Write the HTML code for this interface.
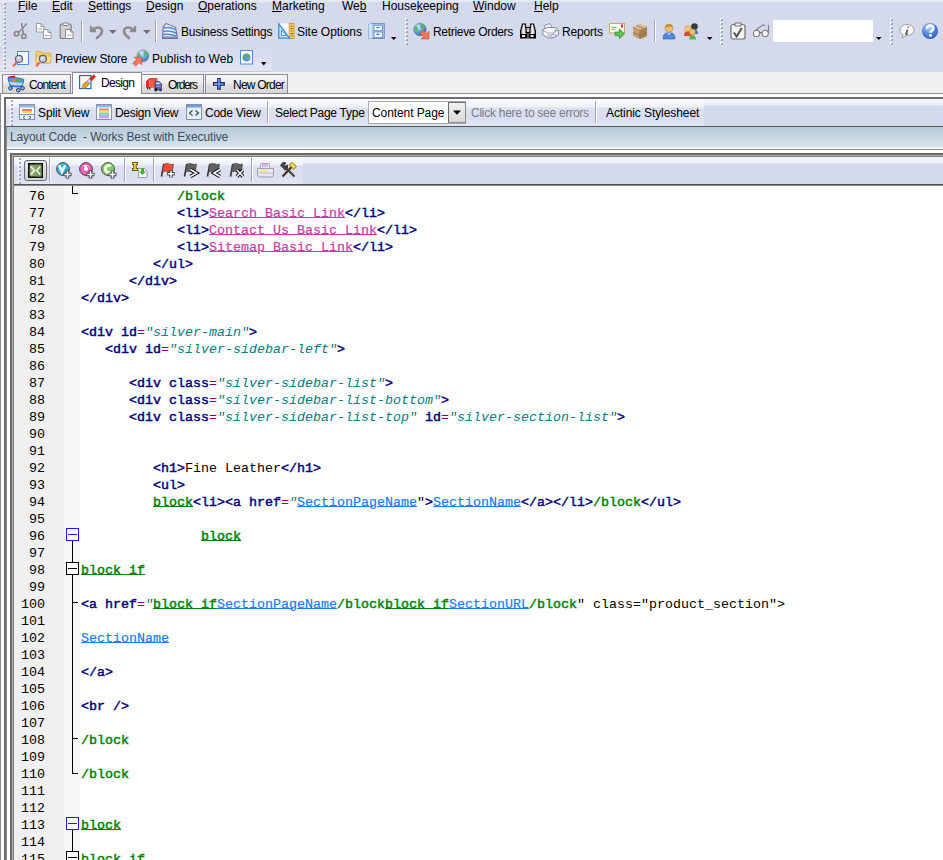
<!DOCTYPE html>
<html><head><meta charset="utf-8"><style>
*{margin:0;padding:0;box-sizing:border-box}
html,body{width:943px;height:860px;overflow:hidden;background:#f0f0f0;font-family:"Liberation Sans",sans-serif;font-size:11.5px;color:#000}
.a{position:absolute}
.t{position:absolute;white-space:pre;line-height:14px;font-size:12px}
.u{text-decoration:underline}
.code span{text-underline-offset:0px}
svg{position:absolute;overflow:visible}
.code{position:absolute;left:81px;top:188px;font-family:"Liberation Mono",monospace;font-size:13.33px;line-height:17px;white-space:pre;color:#000}
.ln{position:absolute;left:15px;top:188px;width:30px;text-align:right;font-family:"Liberation Mono",monospace;font-size:13.33px;line-height:17px;white-space:pre;color:#000}
.tg{color:#000080;-webkit-text-stroke:0.45px #000080}
.an{color:#000080;-webkit-text-stroke:0.45px #000080}
.eq{color:#800080}
.av{color:#008080;font-style:italic}
.bl{color:#008000;-webkit-text-stroke:0.45px #008000}
.blu{color:#008000;-webkit-text-stroke:0.45px #008000;text-decoration:underline}
.lk{color:#cc38a8;-webkit-text-stroke:0.2px #cc38a8;text-decoration:underline}
.sp{color:#1a7ef0;-webkit-text-stroke:0.2px #1a7ef0;text-decoration:underline}
.grip{position:absolute;width:3px;background-image:linear-gradient(#a4a8bc 2px,transparent 2px),linear-gradient(#fff 2px,transparent 2px);background-size:2px 4px,2px 4px;background-position:1px 1px,0 0;background-repeat:repeat-y}
.sep{position:absolute;width:1px;background:#a0a4b8;border-right:1px solid #fff;width:2px}
</style></head><body>
<div class="a" style="left:0;top:0;width:943px;height:72px;background:#d4d9ec"></div>
<div class="a" style="left:0;top:0;width:943px;height:2px;background:#e6e9f4"></div>
<div class="a" style="left:0;top:0;width:1px;height:72px;background:#e6e9f4"></div>
<div class="a" style="left:0;top:46px;width:272px;height:26px;background:linear-gradient(#d4d9ec,#d6dbee 30%,#e2e5f2);border-bottom:1px solid #c6cadc"></div>
<div class="grip" style="left:3px;top:2px;height:14px"></div>
<div class="t" style="left:18px;top:-1px"><span class="u">F</span>ile</div>
<div class="t" style="left:52px;top:-1px"><span class="u">E</span>dit</div>
<div class="t" style="left:88px;top:-1px"><span class="u">S</span>ettings</div>
<div class="t" style="left:146px;top:-1px"><span class="u">D</span>esign</div>
<div class="t" style="left:198px;top:-1px"><span class="u">O</span>perations</div>
<div class="t" style="left:272px;top:-1px"><span class="u">M</span>arketing</div>
<div class="t" style="left:342px;top:-1px">We<span class="u">b</span></div>
<div class="t" style="left:382px;top:-1px">House<span class="u">k</span>eeping</div>
<div class="t" style="left:473px;top:-1px"><span class="u">W</span>indow</div>
<div class="t" style="left:534px;top:-1px"><span class="u">H</span>elp</div>
<div class="grip" style="left:3px;top:17px;height:28px"></div>
<div class="t" style="left:181px;top:25px;letter-spacing:-0.25px;">Business Settings</div>
<div class="t" style="left:297px;top:25px;letter-spacing:-0.036px;">Site Options</div>
<div class="t" style="left:433px;top:25px;letter-spacing:-0.314px;">Retrieve Orders</div>
<div class="t" style="left:562px;top:25px;letter-spacing:-0.167px;">Reports</div>
<div class="t" style="left:55px;top:52px;letter-spacing:-0.192px;">Preview Store</div>
<div class="t" style="left:152px;top:52px;letter-spacing:0.046px;">Publish to Web</div>
<div class="grip" style="left:3px;top:46px;height:25px"></div>
<div class="a" style="left:2px;top:74px;width:69px;height:19px;background:linear-gradient(#f6f6f6,#ececec 45%,#e0e0e0 55%,#d6d6d6);border:1px solid #898c95;border-bottom:none"></div>
<div class="t" style="left:29px;top:78px;letter-spacing:-0.883px;">Content</div>
<div class="a" style="left:141px;top:74px;width:63px;height:19px;background:linear-gradient(#f6f6f6,#ececec 45%,#e0e0e0 55%,#d6d6d6);border:1px solid #898c95;border-bottom:none"></div>
<div class="t" style="left:168px;top:78px;letter-spacing:-1.34px;">Orders</div>
<div class="a" style="left:205px;top:74px;width:83px;height:19px;background:linear-gradient(#f6f6f6,#ececec 45%,#e0e0e0 55%,#d6d6d6);border:1px solid #898c95;border-bottom:none"></div>
<div class="t" style="left:233px;top:78px;letter-spacing:-0.775px;">New Order</div>
<div class="a" style="left:0;top:93px;width:943px;height:767px;background:#fff;border-left:1px solid #898c95;border-top:1px solid #898c95"></div>
<div class="a" style="left:72px;top:72px;width:70px;height:22px;background:#fff;border:1px solid #898c95;border-bottom:none"></div>
<div class="t" style="left:101px;top:76px;letter-spacing:-0.68px;">Design</div>
<div class="a" style="left:4px;top:97px;width:939px;height:763px;background:#fff;border-left:2px solid #6e6e6e;border-top:2px solid #6e6e6e"></div>
<div class="a" style="left:6px;top:99px;width:937px;height:27px;background:linear-gradient(#f6f7fb,#eceef7 6px,#d4d9ec 7px,#d4d9ec)"></div>
<div class="a" style="left:6px;top:99px;width:698px;height:27px;background:linear-gradient(#fbfcfe,#eff1f8 8px,#dde0f0 9px,#dadeef 20px,#e2e5f2)"></div>
<div class="a" style="left:6px;top:126px;width:937px;height:1px;background:#555"></div>
<div class="grip" style="left:10px;top:99px;height:28px"></div>
<div class="t" style="left:38px;top:106px;letter-spacing:-0.111px;">Split View</div>
<div class="t" style="left:115px;top:106px;letter-spacing:-0.3px;">Design View</div>
<div class="t" style="left:205px;top:106px;letter-spacing:-0.25px;">Code View</div>
<div class="t" style="left:275px;top:106px;letter-spacing:-0.267px;">Select Page Type</div>
<div class="t" style="left:606px;top:106px;letter-spacing:-0.082px;">Actinic Stylesheet</div>
<div class="t" style="left:471px;top:106px;letter-spacing:-0.261px;color:#7c7c84">Click here to see errors</div>
<div class="sep" style="left:267px;top:101px;height:22px"></div>
<div class="sep" style="left:595px;top:101px;height:22px"></div>
<div class="a" style="left:368px;top:101px;width:98px;height:23px;background:#fff;border:1px solid #a5acb5"></div>
<div class="t" style="left:372px;top:106px;letter-spacing:-0.091px;">Content Page</div>
<div class="a" style="left:448px;top:102px;width:18px;height:21px;background:linear-gradient(#f0f0f0,#d8d8d8);border:1px solid #6a6a6a;border-right-color:#8a8a8a;border-bottom-color:#8a8a8a"></div>
<svg style="left:453px;top:110px" width="8" height="5"><path d="M0 .5h8L4 4.8z" fill="#000"/></svg>
<div class="a" style="left:6px;top:127px;width:937px;height:20px;background:linear-gradient(#b9cad6,#d5e3ee);border-left:1px solid #505050"></div>
<div class="a" style="left:6px;top:147px;width:937px;height:1px;background:#f4f2ee"></div>
<div class="a" style="left:6px;top:149px;width:937px;height:1px;background:#8a8c95"></div>
<div class="a" style="left:6px;top:127px;width:1px;height:733px;background:#8a8a8a"></div>
<div class="t" style="left:10px;top:130px;letter-spacing:-0.128px;color:#3c4a5c">Layout Code  - Works Best with Executive</div>
<div class="a" style="left:7px;top:150px;width:936px;height:710px;background:#fff"></div>
<div class="a" style="left:10px;top:153px;width:933px;height:707px;background:#f0f0f0;border-left:2px solid #6a6a6a;border-top:2px solid #6a6a6a"></div>
<div class="a" style="left:12px;top:155px;width:931px;height:705px;border-left:1px solid #b4b4b4;border-top:1px solid #b4b4b4"></div>
<div class="a" style="left:13px;top:156px;width:930px;height:704px;border-left:1px solid #7c7c7c;border-top:1px solid #7c7c7c"></div>
<div class="a" style="left:14px;top:157px;width:929px;height:27px;background:linear-gradient(#f6f7fb,#eceef7 6px,#d4d9ec 7px,#d4d9ec)"></div>
<div class="a" style="left:14px;top:157px;width:289px;height:27px;background:linear-gradient(#fbfcfe,#eff1f8 8px,#dde0f0 9px,#dadeef 20px,#e2e5f2)"></div>
<div class="a" style="left:14px;top:184px;width:929px;height:1px;background:#555"></div>
<div class="a" style="left:14px;top:185px;width:929px;height:1px;background:#8c8c8c"></div>
<div class="grip" style="left:18px;top:157px;height:28px"></div>
<div class="a" style="left:14px;top:186px;width:50px;height:674px;background:#f0f0f0"></div>
<div class="a" style="left:64px;top:186px;width:16px;height:674px;background:repeating-conic-gradient(#f0f0f0 0 25%,#fff 0 50%) 0 0/2px 2px"></div>
<div class="a" style="left:80px;top:186px;width:863px;height:674px;background:#fff"></div>
<div class="ln">76
77
78
79
80
81
82
83
84
85
86
87
88
89
90
91
92
93
94
95
96
97
98
99
100
101
102
103
104
105
106
107
108
109
110
111
112
113
114
115</div>
<div class="code">            <span class="bl">/block</span>
            <span class="tg">&lt;li&gt;</span><span class="lk">Search Basic Link</span><span class="tg">&lt;/li&gt;</span>
            <span class="tg">&lt;li&gt;</span><span class="lk">Contact Us Basic Link</span><span class="tg">&lt;/li&gt;</span>
            <span class="tg">&lt;li&gt;</span><span class="lk">Sitemap Basic Link</span><span class="tg">&lt;/li&gt;</span>
         <span class="tg">&lt;/ul&gt;</span>
      <span class="tg">&lt;/div&gt;</span>
<span class="tg">&lt;/div&gt;</span>

<span class="tg">&lt;div </span><span class="an">id</span><span class="eq">=</span><span class="av">&quot;silver-main&quot;</span><span class="tg">&gt;</span>
   <span class="tg">&lt;div </span><span class="an">id</span><span class="eq">=</span><span class="av">&quot;silver-sidebar-left&quot;</span><span class="tg">&gt;</span>

      <span class="tg">&lt;div </span><span class="an">class</span><span class="eq">=</span><span class="av">&quot;silver-sidebar-list&quot;</span><span class="tg">&gt;</span>
      <span class="tg">&lt;div </span><span class="an">class</span><span class="eq">=</span><span class="av">&quot;silver-sidebar-list-bottom&quot;</span><span class="tg">&gt;</span>
      <span class="tg">&lt;div </span><span class="an">class</span><span class="eq">=</span><span class="av">&quot;silver-sidebar-list-top&quot;</span> <span class="an">id</span><span class="eq">=</span><span class="av">&quot;silver-section-list&quot;</span><span class="tg">&gt;</span>


         <span class="tg">&lt;h1&gt;</span>Fine Leather<span class="tg">&lt;/h1&gt;</span>
         <span class="tg">&lt;ul&gt;</span>
         <span class="blu">block</span><span class="tg">&lt;li&gt;&lt;a </span><span class="an">href</span><span class="eq">=</span><span class="av">&quot;</span><span class="sp">SectionPageName</span>&quot;<span class="tg">&gt;</span><span class="sp">SectionName</span><span class="tg">&lt;/a&gt;&lt;/li&gt;</span><span class="bl">/block</span><span class="tg">&lt;/ul&gt;</span>

               <span class="blu">block</span>

<span class="blu">block if</span>

<span class="tg">&lt;a </span><span class="an">href</span><span class="eq">=</span><span class="av">&quot;</span><span class="blu">block if</span><span class="sp">SectionPageName</span><span class="bl">/block</span><span class="blu">block if</span><span class="sp">SectionURL</span><span class="bl">/block</span>&quot; class=&quot;product_section&quot;&gt;

<span class="sp">SectionName</span>

<span class="tg">&lt;/a&gt;</span>

<span class="tg">&lt;br /&gt;</span>

<span class="bl">/block</span>

<span class="bl">/block</span>


<span class="blu">block</span>

<span class="blu">block if</span></div>
<!-- row1 icons -->
<svg style="left:13px;top:22px" width="16" height="18" viewBox="0 0 16 18"><g stroke="#8a8a8a" fill="none"><path d="M8.5 1l1.8 10.5M14 1.5L5.5 10.5" stroke-width="1.5"/><circle cx="3.6" cy="11.8" r="2.2" stroke-width="1.7"/><circle cx="10.8" cy="14.3" r="2.2" stroke-width="1.7"/></g></svg>
<svg style="left:35px;top:22px" width="18" height="18" viewBox="0 0 18 18"><g stroke="#9a9a9a" fill="#fcfcfc"><path d="M1.5 1.5h4.5l3 3v5.5h-7.5z"/><path d="M8.5 7.5h4.5l3 3v6h-7.5z"/></g><path d="M6 1.5v3h3M13 7.5v3h3" fill="none" stroke="#9a9a9a"/><path d="M3 7h4M10 13.5h4.5" stroke="#a8a8a8"/></svg>
<svg style="left:59px;top:22px" width="16" height="18" viewBox="0 0 16 18"><rect x="1.2" y="2" width="11" height="14.5" rx="2" fill="#d0d0d0" stroke="#7e7e7e" stroke-width="1.1"/><rect x="4" y="1" width="5.5" height="2.5" rx=".8" fill="#f4f4f4" stroke="#7e7e7e"/><path d="M6.5 7.5h5l2.5 2.5v6.5H6.5z" fill="#fff" stroke="#8a8a8a"/><path d="M11.5 7.5V10H14" fill="none" stroke="#8a8a8a"/><path d="M8 13h4.5" stroke="#a8a8a8"/></svg>
<div class="a" style="left:81px;top:20px;width:1px;height:22px;background:#9ea3b5"></div><div class="a" style="left:82px;top:20px;width:1px;height:22px;background:#fff"></div>
<svg style="left:89px;top:23px" width="15" height="16" viewBox="0 0 15 16"><path d="M2 3v5h5" fill="none" stroke="#8d8d8d" stroke-width="2.4" stroke-linejoin="round"/><path d="M3 7.5C6 3.5 13 3 13 8.5c0 3-3 4.5-5 6.5" fill="none" stroke="#8d8d8d" stroke-width="2.6" stroke-linecap="round"/></svg>
<svg style="left:109px;top:30px" width="8" height="4"><path d="M0 0h7.5L3.75 4z" fill="#6e6e6e"/></svg>
<svg style="left:122px;top:23px" width="15" height="16" viewBox="0 0 15 16"><path d="M13 3v5H8" fill="none" stroke="#8d8d8d" stroke-width="2.4" stroke-linejoin="round"/><path d="M12 7.5C9 3.5 2 3 2 8.5c0 3 3 4.5 5 6.5" fill="none" stroke="#8d8d8d" stroke-width="2.6" stroke-linecap="round"/></svg>
<svg style="left:143px;top:30px" width="8" height="4"><path d="M0 0h7.5L3.75 4z" fill="#6e6e6e"/></svg>
<div class="a" style="left:155px;top:20px;width:1px;height:22px;background:#9ea3b5"></div><div class="a" style="left:156px;top:20px;width:1px;height:22px;background:#fff"></div>
<svg style="left:162px;top:23px" width="16" height="16" viewBox="0 0 16 16"><path d="M4 .6L1.2 4.2.6 15.4h14.8L13.6 4.3z" fill="#eef4fc" stroke="#6a6c94" stroke-width="1.1"/><path d="M1.5 5.2Q7 3.5 13.8 6.8M1.3 8.5Q7.5 7 14.2 10M1 11.6Q8 10.5 14.8 13" fill="none" stroke="#4a8ae0" stroke-width="1.5"/><rect x="1" y="13.3" width="14" height="1.8" fill="#8a90bc"/></svg>
<svg style="left:278px;top:23px" width="17" height="16" viewBox="0 0 17 16"><rect x="2" y=".5" width="10" height="15" fill="#fff"/><rect x="11.2" y=".5" width="4.8" height="15" fill="#f4d060" stroke="#c89a30" stroke-width=".9"/><path d="M12.5 3h2M12.5 5.5h2.5M12.5 8h2M12.5 10.5h2.5M12.5 13h2" stroke="#705010" stroke-width=".8"/><path d="M.8 .8v14.4h10.8z" fill="#c4e0f8" stroke="#3a88d8" stroke-width="1.2"/><path d="M3.5 7v5.5h5z" fill="#fff" stroke="#3a88d8" stroke-width=".9"/></svg>
<svg style="left:368px;top:23px" width="17" height="16" viewBox="0 0 17 16"><path d="M.6 1.5L4 .5h12.4v15H.6z" fill="#a8c8ee" stroke="#6a90c4" stroke-width=".9"/><path d="M.6 1.5L4 .5v15H.6z" fill="#cfe2f8"/><rect x="6" y="2.2" width="8.5" height="5.5" fill="#f0f6fd" stroke="#6a90c4" stroke-width=".9"/><rect x="6" y="9" width="8.5" height="5.5" fill="#f0f6fd" stroke="#6a90c4" stroke-width=".9"/><path d="M8.5 4.5h3M8.5 11.3h3" stroke="#3a6ab0" stroke-width="1.2"/></svg>
<svg style="left:391px;top:37px" width="6" height="3"><path d="M0 0h5.5L2.75 3z" fill="#000"/></svg>
<div class="grip" style="left:405px;top:18px;height:28px"></div>
<svg style="left:412px;top:22px" width="18" height="18" viewBox="0 0 18 18"><defs><radialGradient id="gl" cx=".35" cy=".3" r=".8"><stop offset="0" stop-color="#d8ecff"/><stop offset=".5" stop-color="#5aa0e0"/><stop offset="1" stop-color="#2a60b0"/></radialGradient></defs><circle cx="8" cy="7.5" r="6.3" fill="url(#gl)" stroke="#707890" stroke-width=".6"/><path d="M3.5 4.5c1.5-.5 3 .5 2.5 2s-1.5 1.5-1 3-1 1-1.5-.5S2.5 5 3.5 4.5zM8.5 2c2.5.3 4.5 2 4.8 4-1.5-.3-2.5.2-3 1-1.5-.5-2.3-2.5-1.8-5z" fill="#5cb84a" opacity=".9"/><path d="M17 9v8H9l2.5-2.5L8 11l3-3 3.5 3.5z" fill="#f4785a" stroke="#c84a30" stroke-width=".6"/></svg>
<!-- row1 right -->
<svg style="left:520px;top:23px" width="16" height="16" viewBox="0 0 16 16"><defs><linearGradient id="bn" x1="0" x2="1"><stop offset="0" stop-color="#909090"/><stop offset=".5" stop-color="#f4f4f4"/><stop offset="1" stop-color="#a0a0a0"/></linearGradient></defs><g stroke="#000" stroke-width="1.2"><path d="M2.5 1h3v3.5l1.5 1.5V15H.6V8z" fill="url(#bn)"/><path d="M10.5 1h3l1.9 7v7H9V6l1.5-1.5z" fill="url(#bn)"/><rect x="6" y="4.5" width="4" height="5" fill="#d0d0d0"/></g><rect x=".6" y="11" width="6.4" height="4" fill="#000"/><rect x="9" y="11" width="6.4" height="4" fill="#000"/><rect x="2" y="12" width="3" height="2" fill="#e8e8e8"/><rect x="10.5" y="12" width="3" height="2" fill="#e8e8e8"/></svg>
<svg style="left:542px;top:23px" width="18" height="16" viewBox="0 0 18 16"><path d="M3.5 6L2 2.5 8 .5l2.5 5z" fill="#e8f0fa" stroke="#8a88a8" stroke-width=".9"/><path d="M.8 6.5L6 4.5h7l3.5 2.5v5L11 15H5.5L.8 11.5z" fill="#f4f4fa" stroke="#8a88a8" stroke-width="1"/><path d="M.8 7.5L6 10h5l5.5-3M6 10v5M11 10v5" fill="none" stroke="#a8a8c0" stroke-width=".9"/><path d="M7 12.5l5-1.5 3 1.5-4 2z" fill="#dde8f8" stroke="#8a88a8" stroke-width=".7"/><rect x="12.5" y="6.8" width="2" height="1.2" fill="#3ab03a"/></svg>
<svg style="left:608px;top:22px" width="18" height="17" viewBox="0 0 18 17"><rect x="1.5" y="1.5" width="15" height="9.5" fill="#fdfaf0" stroke="#c8a868"/><rect x="13" y="2.5" width="2" height="3" fill="#e83030"/><path d="M3.5 5.5h5M3.5 7.5h3.5" stroke="#5a9ae0" stroke-width=".9"/><path d="M7 10h4.5V7l5 4.8-5 4.8v-3H7z" fill="#58c848" stroke="#2a8a2a" stroke-width=".8"/></svg>
<svg style="left:632px;top:23px" width="16" height="16" viewBox="0 0 16 16"><path d="M1 4l7-3 7 3v9l-7 3-7-3z" fill="#c4a070"/><path d="M1 4l7 3 7-3M8 7v9" stroke="#8a6a40" fill="none"/><path d="M8 7l7-3v9l-7 3z" fill="#a88050"/><path d="M1 4l7-3 7 3-7 3z" fill="#e0c090"/><path d="M1 9.5l7 3 7-3M4.5 2.5l7 3" stroke="#8a6a40" fill="none" stroke-width=".8"/></svg>
<div class="a" style="left:654px;top:20px;width:1px;height:22px;background:#9ea3b5"></div><div class="a" style="left:655px;top:20px;width:1px;height:22px;background:#fff"></div>
<svg style="left:662px;top:22px" width="14" height="18" viewBox="0 0 14 18"><path d="M1 17c0-4.5 2-6.5 6-6.5s6 2 6 6.5z" fill="#4a88d8" stroke="#3a60a0" stroke-width=".6"/><path d="M5.5 10.5l1.5 2 1.5-2" stroke="#fff" fill="none" stroke-width=".9"/><circle cx="7" cy="6" r="4" fill="#f0c070" stroke="#b08030" stroke-width=".5"/><path d="M3 5.5c0-4 8-4 8 0-1.5-1.5-6.5-1.5-8 0z" fill="#b8862a"/></svg>
<svg style="left:683px;top:22px" width="18" height="18" viewBox="0 0 18 18"><circle cx="11.5" cy="4.5" r="3.3" fill="#3a3a3a"/><path d="M8 12c0-3 1.5-5 3.5-5s3.5 2 3.5 5z" fill="#4a6aa8"/><circle cx="4.8" cy="6.8" r="3.2" fill="#f0c878" stroke="#c09040" stroke-width=".5"/><path d="M1 14c0-3.5 1.2-4.5 3.8-4.5s3.8 1 3.8 4.5z" fill="#e04a30"/><circle cx="9.5" cy="10" r="3" fill="#f0c070" stroke="#a07030" stroke-width=".5"/><path d="M6 17.5c0-3 1.5-4.3 3.5-4.3s3.5 1.3 3.5 4.3z" fill="#58b848"/></svg>
<svg style="left:707px;top:37px" width="6" height="3"><path d="M0 0h5.5L2.75 3z" fill="#000"/></svg>
<div class="grip" style="left:720px;top:18px;height:28px"></div>
<svg style="left:730px;top:22px" width="17" height="18" viewBox="0 0 17 18"><rect x="1" y="2.5" width="14" height="14.5" rx="2" fill="#f4f4f4" stroke="#6e6e6e" stroke-width="1.2"/><rect x="5" y="1" width="6" height="3" rx=".5" fill="#f0f0f0" stroke="#6e6e6e" stroke-width="1.1"/><path d="M3.8 10.5l2.8 4 5.2-8.5" fill="none" stroke="#505050" stroke-width="2"/></svg>
<svg style="left:752px;top:24px" width="18" height="14" viewBox="0 0 18 14"><g fill="#f8f8f8" stroke="#7a7a7a" stroke-width="1.1"><circle cx="4.5" cy="9.4" r="3.1"/><circle cx="13.2" cy="9.4" r="3.1"/></g><path d="M7.6 8.6h2.5M2.8 6.8L11 .9q1.2-.5 1.3 1.2M16.4 8.8V.8" fill="none" stroke="#7a7a7a" stroke-width="1.1"/></svg>
<div class="a" style="left:773px;top:20px;width:100px;height:22px;background:#fff"></div>
<svg style="left:876px;top:37px" width="6" height="3"><path d="M0 0h5.5L2.75 3z" fill="#000"/></svg>
<div class="grip" style="left:890px;top:18px;height:28px"></div>
<svg style="left:899px;top:23px" width="16" height="16" viewBox="0 0 16 16"><path d="M8 1.5c4 0 7 2.5 7 5.5s-3 5.5-7 5.5l-1 0-4 2.5 1-3.5C2 10.5 1 9 1 7c0-3 3-5.5 7-5.5z" fill="#f8f8f8" stroke="#a0a0a0"/><path d="M8.6 4.2h1.2M8.6 6.5l-1.5 4.5h1.6" stroke="#505050" stroke-width="1.6" fill="none"/></svg>
<svg style="left:921px;top:22px" width="18" height="18" viewBox="0 0 18 18"><defs><radialGradient id="hg" cx=".4" cy=".3" r=".8"><stop offset="0" stop-color="#b8d4f8"/><stop offset=".55" stop-color="#4a80d8"/><stop offset="1" stop-color="#2a58b0"/></radialGradient></defs><circle cx="9" cy="9" r="8" fill="url(#hg)"/><path d="M5.8 6.8c0-2.2 1.6-3.2 3.3-3.2s3.2 1 3.2 2.8c0 2.2-2.7 2.2-2.7 4.3" fill="none" stroke="#fff" stroke-width="2.6"/><rect x="8.2" y="12.2" width="2.6" height="2.4" fill="#fff"/></svg>
<!-- row2 icons -->
<svg style="left:12px;top:50px" width="18" height="18" viewBox="0 0 18 18"><rect x="5.5" y="1.5" width="11" height="13" fill="#f4f8fc" stroke="#4a8ad8"/><path d="M1.2 16.3l3.2-3.8" stroke="#f05a3a" stroke-width="2"/><circle cx="7" cy="8.9" r="3.5" fill="#c8c8e8" stroke="#606070" stroke-width="1.2"/><circle cx="6.3" cy="8" r="1.2" fill="#fff" opacity=".8"/></svg>
<svg style="left:35px;top:49px" width="18" height="19" viewBox="0 0 18 19"><path d="M1 2.5h5l1.5 1.5h8V14H1z" fill="#f0d060" stroke="#c8a030" stroke-width=".7"/><path d="M1 7h15.8L15 14H1z" fill="#f8e088" stroke="#c8a040" stroke-width=".6"/><path d="M1.2 17.3l3.2-3.8" stroke="#f05a3a" stroke-width="2"/><circle cx="7.9" cy="9.9" r="3.5" fill="#c8c8e8" stroke="#606070" stroke-width="1.2"/><circle cx="7.2" cy="9" r="1.2" fill="#fff" opacity=".8"/></svg>
<svg style="left:132px;top:49px" width="18" height="20" viewBox="0 0 18 20"><defs><radialGradient id="gl2" cx=".4" cy=".25" r=".8"><stop offset="0" stop-color="#e8f4ff"/><stop offset=".5" stop-color="#6aaae8"/><stop offset="1" stop-color="#3a6ab8"/></radialGradient></defs><circle cx="10.9" cy="6.9" r="5.9" fill="url(#gl2)" stroke="#707890" stroke-width=".7"/><path d="M6.5 4.5c1.5-.5 2.5.5 2 2s-1.5 1.5-1 3-1.5.5-1.5-1S5.5 5 6.5 4.5zM11.5 2.2c2.3.3 4 1.8 4.3 3.5-1.3-.2-2.2.2-2.7 1-1.3-.5-2-2.3-1.6-4.5z" fill="#60b850" opacity=".85"/><path d="M2 8.2h7.7v7.7l-2.4-2.4-3.6 3.6-2.9-2.9 3.6-3.6z" fill="#f4785a" stroke="#c84a30" stroke-width=".6"/></svg>
<svg style="left:240px;top:50px" width="14" height="15" viewBox="0 0 14 15"><rect x=".5" y=".5" width="12" height="13.5" fill="#fff" stroke="#4a8ed8"/><circle cx="6.5" cy="7.5" r="4" fill="#5a9ad8"/><path d="M4 5c1 0 2 1 1.5 2S4 8 4.5 9.5 3 10 3 8.5 3 5.5 4 5zM7 3.5c2 .5 3 2 3 3-1 0-2 .5-2 1-1 0-2-2-1-4z" fill="#5cb04c"/></svg>
<svg style="left:261px;top:62px" width="6" height="4"><path d="M0 0h5.5L2.75 3.5z" fill="#000"/></svg>
<!-- tabs icons -->
<svg style="left:6px;top:75px" width="19" height="18" viewBox="0 0 19 18"><path d="M2 2.6L9 1.3" stroke="#c81818" stroke-width="1.8"/><path d="M1.8 3.2C5 2 13 2.5 18 4.5L16 11.5C12 12.5 7 12 4 10.5z" fill="#4a9ae4" stroke="#2a68c0" stroke-width=".9"/><path d="M3.5 6.5C7 7.5 12 8 16.5 7.5L16 10C12 10.8 7 10.2 4 9z" fill="#d8ecfa" opacity=".8"/><ellipse cx="10" cy="5" rx="4" ry="1.5" fill="#f08030"/><ellipse cx="12" cy="5.2" rx="2.2" ry="1.2" fill="#50b040"/><g fill="#8ac0ea" stroke="#203050" stroke-width="1"><circle cx="4.5" cy="13.2" r="1.8"/><circle cx="16.5" cy="13.2" r="1.8"/><circle cx="12.3" cy="15.2" r="1.8"/></g></svg>
<svg style="left:78px;top:74px" width="18" height="16" viewBox="0 0 18 16"><rect x="1.6" y="1.6" width="11.4" height="13" fill="#fff" stroke="#1a6ad8" stroke-width="1.2"/><path d="M4 14.5C4 11 5.8 8.5 8.8 7.3L11.2 9.7C10.2 12.6 7.5 14.5 4 14.5z" fill="#e0a810" stroke="#a07010" stroke-width=".5"/><path d="M8.8 7.3L11.4 4.8 13.8 7.2 11.2 9.7z" fill="#d0c8f4" stroke="#6a60b0" stroke-width=".6"/><path d="M11.2 4.6l4.5-4.2 2.2 2.2-4.2 4.6z" fill="#d82a1a"/></svg>
<svg style="left:145px;top:77px" width="18" height="15" viewBox="0 0 18 15"><path d="M1 4.5L4.5 1.2H12.3V10.5H1z" fill="#d42010"/><path d="M1 4.5L4.5 1.2V10.5H1z" fill="#e83020"/><path d="M4.5 2.2H12V10H4.5z" fill="#f05a40"/><path d="M4.5 3v7" stroke="#ff9a80" stroke-width=".8"/><path d="M10 4.5h4.3l2.2 2.5v6h-6.5z" fill="#5860a8" stroke="#30387a" stroke-width=".7"/><path d="M11 5.3h3l1.5 2h-4.5z" fill="#b8d8f8"/><path d="M11 9.5h4.5" stroke="#9aa0d0" stroke-width="1"/><rect x="2" y="10" width="1.3" height="2.5" fill="#404040"/><rect x="4" y="10" width="1.3" height="2.5" fill="#404040"/><ellipse cx="10.8" cy="12.5" rx="1.5" ry="2" fill="#202020"/><ellipse cx="15.5" cy="13.3" rx="1.2" ry=".9" fill="#202020"/></svg>
<svg style="left:212px;top:76px" width="14" height="15" viewBox="0 0 14 15"><defs><linearGradient id="pg" x1="0" y1="0" x2="1" y2="1"><stop offset="0" stop-color="#9ad8ff"/><stop offset="1" stop-color="#2a88e8"/></linearGradient></defs><path d="M5.7 2.5h2.5v4.1h4.1v2.7H8.2v4H5.7v-4H1.5V6.6h4.2z" fill="url(#pg)" stroke="#20206a" stroke-width="1.1"/></svg>
<!-- design toolbar icons -->
<svg style="left:19px;top:104px" width="16" height="16" viewBox="0 0 16 16"><rect x=".5" y=".5" width="15" height="15" fill="#fff" stroke="#8a90a8"/><rect x="1" y="1" width="14" height="2.5" fill="#8ab8ec"/><rect x="3" y="5" width="10" height="2" fill="#f87a68"/><rect x="3" y="7" width="10" height="2" fill="#f8d860"/><path d="M1 10.5h14" stroke="#8a90a8"/><rect x="1" y="11" width="14" height="4" fill="#e0f0fa"/><path d="M6 11.8l-2 1.6 2 1.6M10 11.8l2 1.6-2 1.6" stroke="#505050" fill="none" stroke-width=".9"/></svg>
<svg style="left:96px;top:104px" width="16" height="16" viewBox="0 0 16 16"><rect x=".5" y=".5" width="15" height="15" fill="#fff" stroke="#8a90a8"/><rect x="1" y="1" width="14" height="2.5" fill="#8ab8ec"/><rect x="3" y="4.5" width="10" height="2" fill="#f87a68"/><rect x="3" y="6.5" width="10" height="2" fill="#f8d860"/><rect x="3" y="8.5" width="10" height="2" fill="#80dc80"/><rect x="3" y="10.5" width="10" height="2" fill="#80b0f8"/><rect x="3" y="12.5" width="10" height="1.8" fill="#c890f4"/></svg>
<svg style="left:186px;top:104px" width="16" height="16" viewBox="0 0 16 16"><rect x=".5" y=".5" width="15" height="15" fill="#e4f2fc" stroke="#8a90a8"/><rect x="1" y="1" width="14" height="2.5" fill="#6aa0e0"/><path d="M6.5 6.5l-3 2.5 3 2.5M9.5 6.5l3 2.5-3 2.5" stroke="#404040" fill="none" stroke-width="1.1"/></svg>
<!-- editor toolbar icons -->
<div class="a" style="left:24px;top:160px;width:23px;height:21px;border:1px solid #6a6a72;border-radius:3px;background:linear-gradient(#e8e8ee,#d0d2dc)"></div>
<svg style="left:28px;top:163px" width="15" height="15" viewBox="0 0 15 15"><rect x=".8" y=".8" width="13.4" height="13.4" fill="#8aac6a" stroke="#101010" stroke-width="1.6"/><rect x="7.5" y="1.6" width="5.9" height="11.8" fill="#76985a"/><path d="M2.8 3.5l3.6 4-3.6 4M12.2 3.5L8.6 7.5l3.6 4" stroke="#f0f8e8" stroke-width="1.6" fill="none"/></svg>
<div class="a" style="left:49px;top:158px;width:1px;height:24px;background:#a0a4b8"></div><div class="a" style="left:50px;top:158px;width:1px;height:24px;background:#fff"></div>
<svg style="left:56px;top:162px" width="17" height="17" viewBox="0 0 17 17"><circle cx="7" cy="7" r="6.4" fill="#3ab0d8" stroke="#4a4a4a" stroke-width="1"/><path d="M3 3.2l3 6.5 3-6.5" stroke="#fff" stroke-width="2.6" fill="none"/><path d="M11.5 8.5v8M7.5 12.5h8" stroke="#404040" stroke-width="3.6"/><path d="M11.5 9.3v6.4M8.3 12.5h6.4" stroke="#fff" stroke-width="1.6"/></svg>
<svg style="left:79px;top:162px" width="17" height="17" viewBox="0 0 17 17"><circle cx="7" cy="7" r="6.4" fill="#f050b0" stroke="#4a4a4a" stroke-width="1"/><circle cx="7" cy="7" r="4.2" fill="#fff"/><circle cx="7" cy="7" r="3" fill="none" stroke="#f050b0" stroke-width="1.8" stroke-dasharray="12 3"/><path d="M11.5 8.5v8M7.5 12.5h8" stroke="#404040" stroke-width="3.6"/><path d="M11.5 9.3v6.4M8.3 12.5h6.4" stroke="#fff" stroke-width="1.6"/></svg>
<svg style="left:101px;top:162px" width="17" height="17" viewBox="0 0 17 17"><circle cx="7" cy="7" r="6.4" fill="#80d060" stroke="#4a4a4a" stroke-width="1"/><path d="M9.8 4.3a3.4 3.4 0 1 0 0 5.4" stroke="#fff" stroke-width="2.6" fill="none"/><path d="M11.5 8.5v8M7.5 12.5h8" stroke="#404040" stroke-width="3.6"/><path d="M11.5 9.3v6.4M8.3 12.5h6.4" stroke="#fff" stroke-width="1.6"/></svg>
<div class="a" style="left:124px;top:158px;width:1px;height:24px;background:#a0a4b8"></div><div class="a" style="left:125px;top:158px;width:1px;height:24px;background:#fff"></div>
<svg style="left:131px;top:162px" width="17" height="16" viewBox="0 0 17 16"><path d="M1 1.5h6M4 1.5v6M1 7.5h6" stroke="#303000" stroke-width="3"/><path d="M1.5 1.5h5M4 1.5v6M1.5 7.5h5" stroke="#f8e020" stroke-width="1.6"/><path d="M7.5 6.5h6l2.5 2.5v6.5H7.5z" fill="#fff" stroke="#a0a0a0"/><path d="M10 6v3.5H8l3.5 3.5L15 9.5h-2V6z" fill="#3ab03a"/></svg>
<div class="a" style="left:153px;top:158px;width:1px;height:24px;background:#a0a4b8"></div><div class="a" style="left:154px;top:158px;width:1px;height:24px;background:#fff"></div>
<svg style="left:160px;top:162px" width="17" height="16" viewBox="0 0 17 16"><path d="M1.5 14.5L3.8 1.8" stroke="#303030" stroke-width="1.6"/><path d="M3.5 2.5c2-1.5 4-1.2 6-.5s2.5.5 4 0L12.3 10c-1.5.5-3 .3-4.5-.3S4.5 9 2.3 10.2z" fill="#f04a3a" stroke="#3a3a3a" stroke-width=".6"/><path d="M11 8v7.5M7.2 11.8h7.6" stroke="#3a3a3a" stroke-width="3.4"/><path d="M11 8.7v6.2M7.9 11.8h6.2" stroke="#fff" stroke-width="1.5"/></svg>
<svg style="left:183px;top:162px" width="17" height="16" viewBox="0 0 17 16"><path d="M1.5 14.5L3.8 1.8" stroke="#303030" stroke-width="1.6"/><path d="M3.5 2.5c2-1.5 4-1.2 6-.5s2.5.5 4 0L12.3 10c-1.5.5-3 .3-4.5-.3S4.5 9 2.3 10.2z" fill="#606060" stroke="#3a3a3a" stroke-width=".6"/><path d="M7.5 7.5l6 3.5-6 3.5" stroke="#000" stroke-width="3.6" fill="none"/><path d="M7.5 7.5l6 3.5-6 3.5" stroke="#fff" stroke-width="1.7" fill="none"/></svg>
<svg style="left:206px;top:162px" width="17" height="16" viewBox="0 0 17 16"><path d="M1.5 14.5L3.8 1.8" stroke="#303030" stroke-width="1.6"/><path d="M3.5 2.5c2-1.5 4-1.2 6-.5s2.5.5 4 0L12.3 10c-1.5.5-3 .3-4.5-.3S4.5 9 2.3 10.2z" fill="#606060" stroke="#3a3a3a" stroke-width=".6"/><path d="M14 7.5L8 11l6 3.5" stroke="#000" stroke-width="3.6" fill="none"/><path d="M14 7.5L8 11l6 3.5" stroke="#fff" stroke-width="1.7" fill="none"/></svg>
<svg style="left:229px;top:162px" width="17" height="16" viewBox="0 0 17 16"><path d="M1.5 14.5L3.8 1.8" stroke="#303030" stroke-width="1.6"/><path d="M3.5 2.5c2-1.5 4-1.2 6-.5s2.5.5 4 0L12.3 10c-1.5.5-3 .3-4.5-.3S4.5 9 2.3 10.2z" fill="#606060" stroke="#3a3a3a" stroke-width=".6"/><path d="M8 8l6 6.5M14 8l-6 6.5" stroke="#000" stroke-width="3.4"/><path d="M8 8l6 6.5M14 8l-6 6.5" stroke="#fff" stroke-width="1.6"/></svg>
<div class="a" style="left:251px;top:158px;width:1px;height:24px;background:#a0a4b8"></div><div class="a" style="left:252px;top:158px;width:1px;height:24px;background:#fff"></div>
<svg style="left:257px;top:162px" width="17" height="16" viewBox="0 0 17 16"><path d="M4 1.5h8l1 5H3z" fill="#fff" stroke="#a8a8b8"/><path d="M5 3h6" stroke="#f070d0" stroke-width="1.2"/><path d="M5 4.8h6" stroke="#70d0f0" stroke-width="1"/><path d="M.5 6.5h16v6.5l-1.5 2h-13l-1.5-2z" fill="#e8e8ee" stroke="#a0a0ac"/><path d="M.5 11h16" stroke="#b8b8c4"/><rect x="4" y="8.5" width="5" height="1.4" fill="#f8e040"/></svg>
<svg style="left:280px;top:162px" width="17" height="16" viewBox="0 0 17 16"><path d="M2.5 14.5L11.5 5" stroke="#502a1a" stroke-width="2.2"/><path d="M9 3l3-2.5 4.5 4-2.5 3z" fill="#f8d830" stroke="#705a10" stroke-width=".7"/><path d="M14.5 14.5L5.5 5.5" stroke="#404040" stroke-width="2.2"/><path d="M1 4.5A3.2 3.2 0 0 1 5.5 1L3.8 3.2 5.2 4.8 7.2 3.2A3.2 3.2 0 0 1 4.2 7.8" fill="#505050" stroke="#303030" stroke-width="1.2"/></svg>
<!-- fold markers -->
<svg style="left:64px;top:185px" width="16" height="675" viewBox="0 0 16 675"><g stroke="#000" fill="none" shape-rendering="crispEdges"><path d="M8.5 1v7.5h5"/><path d="M8.5 356v232h5"/><path d="M8.5 417h5M8.5 553h5"/><path d="M8.5 644v23"/></g><g shape-rendering="crispEdges"><rect x="2.5" y="343.5" width="12" height="12" fill="#fff" stroke="#1a1aff"/><path d="M4 349.5h9" stroke="#1a1aff"/><rect x="2.5" y="377.5" width="12" height="12" fill="#fff" stroke="#000"/><path d="M4 383.5h9" stroke="#000"/><rect x="2.5" y="632.5" width="12" height="12" fill="#fff" stroke="#1a1aff"/><path d="M4 638.5h9" stroke="#1a1aff"/><rect x="2.5" y="666.5" width="12" height="12" fill="#fff" stroke="#000"/><path d="M4 672.5h9" stroke="#000"/></g></svg>

</body></html>
